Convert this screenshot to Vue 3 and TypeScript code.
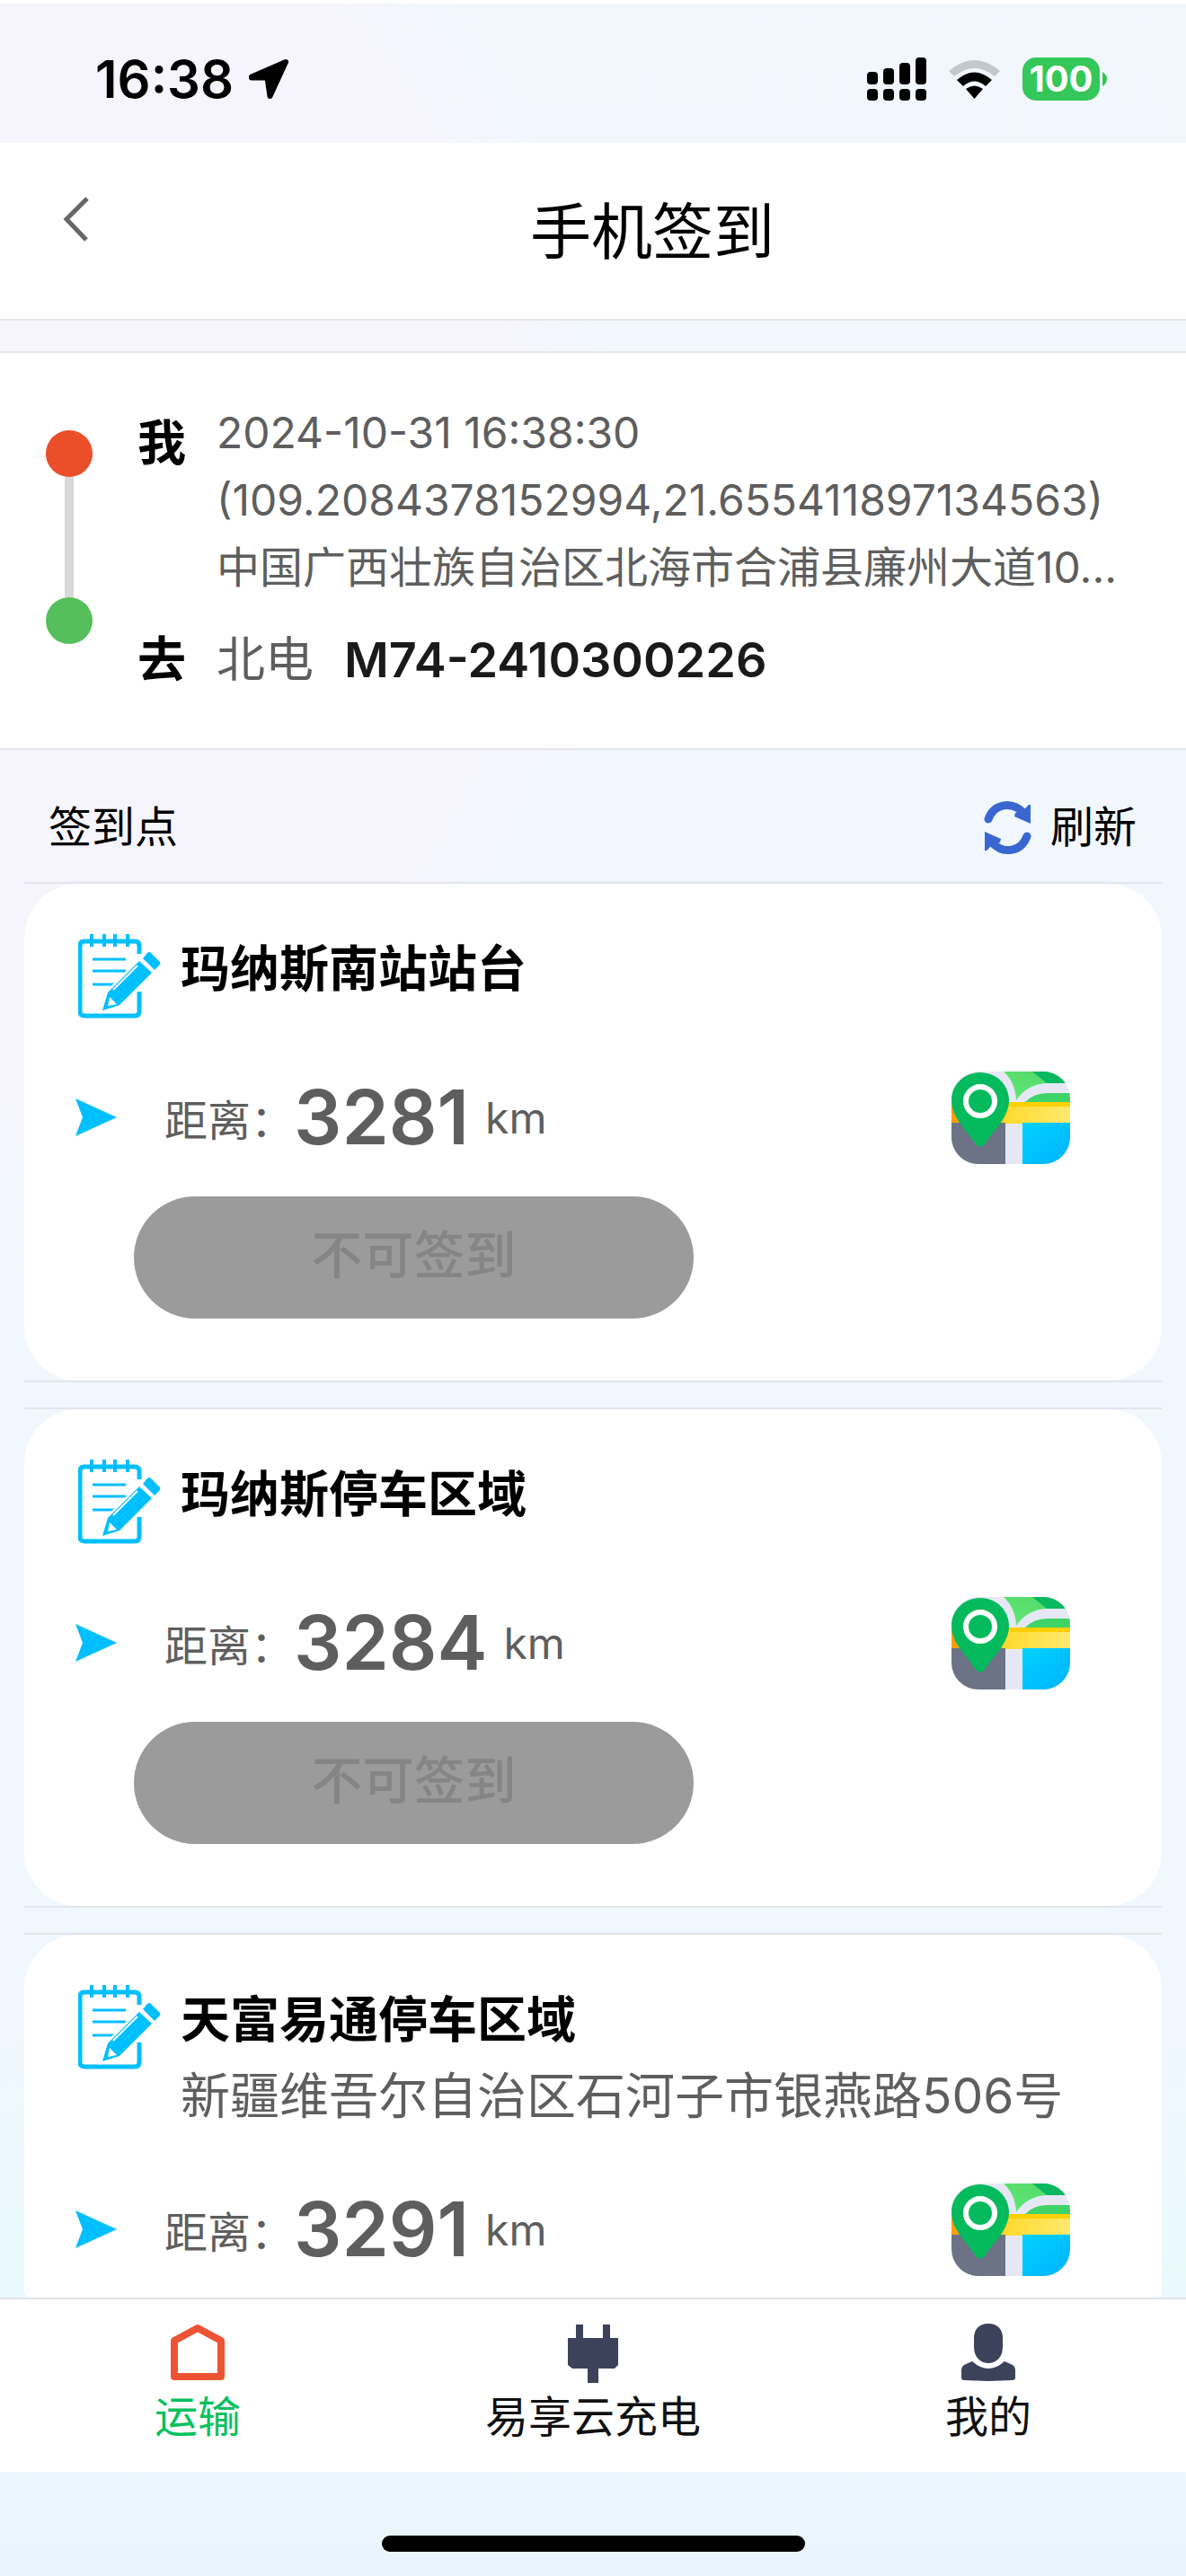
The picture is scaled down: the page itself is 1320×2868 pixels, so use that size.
<script setup lang="ts">
import { ref } from 'vue'

interface CheckPoint {
  id: number
  name: string
  address?: string
  distance: number
  action?: string
}

const points = ref<CheckPoint[]>([
  { id: 1, name: '玛纳斯南站站台', distance: 3281, action: '不可签到' },
  { id: 2, name: '玛纳斯停车区域', distance: 3284, action: '不可签到' },
  { id: 3, name: '天富易通停车区域', address: '新疆维吾尔自治区石河子市银燕路506号', distance: 3291 },
])

const tabs = [
  { key: 'transport', label: '运输' },
  { key: 'charge', label: '易享云充电' },
  { key: 'mine', label: '我的' },
]
const activeTab = ref('transport')
</script>

<template>
  <div class="page">
    <div class="status">
      <span class="time">16:38</span>
      <svg class="locate" width="46" height="46" viewBox="0 0 46 46">
        <path d="M42 4 4 20.500V21.500H21.500L24.500 42 Z" stroke="#000" stroke-width="6" stroke-linejoin="round" />
      </svg>
      <div class="indicators">
        <svg width="66" height="48" viewBox="0 0 66 48">
          <rect x="0" y="16" width="12" height="14" rx="4" />
          <rect x="18" y="12" width="12" height="18" rx="4" />
          <rect x="36" y="6" width="12" height="24" rx="4" />
          <rect x="54" y="0" width="12" height="30" rx="4" />
          <rect v-for="n in 4" :key="n" :x="(n - 1) * 18" y="35" width="12" height="13" rx="4" />
        </svg>
        <svg width="57" height="43" viewBox="0 0 57 43">
          <path d="M0 12Q28.500-12 57 12L51 18Q28.500 0 6 18Z" fill="#c3c7ce" />
          <path d="M9 22Q28.500 5 48 22L41 29Q28.500 18 16 29Z" />
          <path d="M19 32Q28.500 25 38 32L28.500 43Z" />
        </svg>
        <div class="battery">
          <span class="level">100</span>
          <svg width="5" height="16" viewBox="0 0 5 16"><path d="M0 0Q5 3 5 8T0 16Z" fill="#34c759" /></svg>
        </div>
      </div>
    </div>

    <header class="navbar">
      <button class="back" type="button" aria-label="返回">
        <svg width="30" height="50" viewBox="0 0 30 50">
          <path d="M27 2 4 25 26 48" fill="none" stroke="#666" stroke-width="5" />
        </svg>
      </button>
      <h1>手机签到</h1>
    </header>

    <section class="trip">
      <div class="track">
        <i class="dot from"></i>
        <i class="bar"></i>
        <i class="dot to"></i>
      </div>
      <div class="legs">
        <div class="leg">
          <b class="tag me">我</b>
          <p class="where">2024-10-31 16:38:30<br />(109.2084378152994,21.655411897134563)<br />中国广西壮族自治区北海市合浦县廉州大道10...</p>
        </div>
        <div class="leg">
          <b class="tag">去</b>
          <p class="order"><span>北电</span><strong>M74-2410300226</strong></p>
        </div>
      </div>
    </section>

    <div class="list-head">
      <h2>签到点</h2>
      <button class="refresh" type="button">
        <svg width="54" height="61" viewBox="0 0 54 61">
          <g fill="none" stroke="#3a66d1" stroke-width="9" stroke-linecap="round">
            <path d="M5 21C11 4 31 0 44 14" />
            <path d="M48 40C42 57 22 61 9 47" />
          </g>
          <path d="M46 9 50 5H52V26L34 18 35 14 40 13ZM7 52 3 56H1V35L19 43 18 47 13 48Z" fill="#3a66d1" />
        </svg>
        刷新
      </button>
    </div>

    <ul class="points">
      <li v-for="p in points" :key="p.id" class="point">
        <article class="card">
          <div class="head">
            <svg class="note" width="92" height="96" viewBox="0 0 92 96">
              <g fill="none" stroke="#00bfff">
                <path d="M68 23V14Q68 9 63 9H7Q2 9 2 14V87Q2 92 7 92H63Q68 92 68 87V65" stroke-width="5" />
                <path d="M15 1V15M29 1V15M41 1V15M55 1V15" stroke-width="4" />
                <path d="M16 29H53M16 42H53M16 57H44" stroke-width="3" />
              </g>
              <path d="M68 31 82 44 46 80 27 86 33 66Z" fill="#fff" stroke="#fff" stroke-width="5" />
              <path d="M68 31 82 44 46 80 27 86 33 66Z" fill="#00bfff" />
              <path d="M35 71 43 79 33 81Z" fill="#fff" />
              <path d="M39 63 66 36" stroke="#fff" stroke-width="2" />
              <path d="M77 22Q79 20 81 22L91 32Q92 34 90 36L85 41 72 28Z" fill="#00bfff" />
            </svg>
            <div class="text">
              <h3>{{ p.name }}</h3>
              <p v-if="p.address">{{ p.address }}</p>
            </div>
          </div>

          <div class="metric">
            <svg width="46" height="42" viewBox="0 0 46 42"><path d="M0 0 46 21 0 42 8 21Z" fill="#00bfff" /></svg>
            <span class="label">距离：</span>
            <strong>{{ p.distance }}</strong>
            <span class="unit">km</span>
            <button class="map" type="button" aria-label="地图">
              <svg width="132" height="103" viewBox="0 0 132 103">
                <defs>
                  <clipPath :id="'clip' + p.id"><rect width="132" height="103" rx="30" /></clipPath>
                  <linearGradient :id="'road' + p.id" x1="0" y1="0" x2="1" y2="0">
                    <stop offset="0" stop-color="#ff9a0a" />
                    <stop offset="0.200" stop-color="#ffb515" />
                    <stop offset="0.500" stop-color="#ffdb33" />
                    <stop offset="1" stop-color="#ffe970" />
                  </linearGradient>
                  <linearGradient :id="'sea' + p.id" x1="0" y1="0" x2="1" y2="1">
                    <stop offset="0" stop-color="#00d2ff" />
                    <stop offset="1" stop-color="#00b2ff" />
                  </linearGradient>
                  <linearGradient :id="'land' + p.id" x1="0" y1="1" x2="1" y2="0">
                    <stop offset="0" stop-color="#62e878" />
                    <stop offset="1" stop-color="#4fd765" />
                  </linearGradient>
                </defs>
                <g :clip-path="`url(#clip${p.id})`">
                  <rect width="132" height="103" fill="#e5e8f4" />
                  <path d="M58 0Q71 12 72 32Q84 14 106 13H132V0Z" :fill="`url(#land${p.id})`" />
                  <path d="M90 0H132V13H106Z" fill="#0ab85f" />
                  <path d="M82 34Q92 24 106 24H132V34Z" fill="#3fd467" />
                  <rect y="34" width="132" height="24" :fill="`url(#road${p.id})`" />
                  <rect x="60" y="34" width="72" height="5" fill="#ffd000" />
                  <rect y="57" width="60" height="46" fill="#6c7386" />
                  <rect x="79" y="57" width="53" height="46" :fill="`url(#sea${p.id})`" />
                </g>
                <path d="M32 1C50 1 64 15 64 32 64 52 46 66 37 81Q32 86 27 81C18 66 0 52 0 32 0 15 14 1 32 1Z" fill="#04ba5c" />
                <circle cx="32" cy="33" r="16" fill="none" stroke="#fff" stroke-width="6" />
              </svg>
            </button>
          </div>

          <button v-if="p.action" class="check" type="button" disabled>{{ p.action }}</button>
        </article>
      </li>
    </ul>

    <nav class="tabbar">
      <button
        v-for="t in tabs"
        :key="t.key"
        type="button"
        class="tab"
        :class="{ active: t.key === activeTab }"
        @click="activeTab = t.key"
      >
        <svg v-if="t.key === 'transport'" width="64" height="66" viewBox="0 0 64 66">
          <path d="M6 19 32 5 58 19V59H6Z" fill="none" stroke="#ec5434" stroke-width="8" stroke-linejoin="round" />
        </svg>
        <svg v-else-if="t.key === 'charge'" width="64" height="66" viewBox="0 0 64 66">
          <path d="M13 1H21V16H43V1H51V16H60V46L56 50H38V66H26V50H9L4 46V16H13Z" fill="#3d425b" />
        </svg>
        <svg v-else width="64" height="66" viewBox="0 0 64 66">
          <path d="M32 0C43 0 48 7 48 16V26C48 38 40 44 32 44S16 38 16 26V16C16 7 21 0 32 0Z" fill="#3d425b" />
          <path d="M14 42Q32 58 50 42L59 46Q62 48 62 51V60Q62 63 59 63L32 64 5 63Q2 63 2 60V51Q2 48 5 46Z" fill="#3d425b" />
        </svg>
        <span>{{ t.label }}</span>
      </button>
    </nav>

    <div class="home-area"><i></i></div>
  </div>
</template>

<style>
body {
  margin: 0;
}
</style>

<style scoped>
* {
  box-sizing: border-box;
}

.page {
  display: flex;
  flex-direction: column;
  height: 100vh;
  overflow: hidden;
  color: #000;
  font-family: Inter, "Noto Sans CJK SC", sans-serif;
  background:
    radial-gradient(ellipse 52% 28% at 0 19%, #f6f5fe 84%, rgba(246, 245, 254, 0) 100%),
    linear-gradient(#f2f7fe 0%, #f1f7fe 78%, #e9fafd 88%, #edf7fe 94%, #e9f5fe 100%);
}

h1,
h2,
h3,
p,
ul {
  margin: 0;
  padding: 0;
  font-weight: 400;
}

button {
  padding: 0;
  border: 0;
  background: none;
  color: inherit;
  font: inherit;
}

svg {
  display: block;
  flex: none;
}

.status,
.navbar,
.trip,
.list-head,
.tabbar,
.home-area {
  flex: none;
}

.status {
  display: flex;
  align-items: center;
  height: 159px;
  padding: 13px 88px 0 106px;
  border-top: 4px solid #fff;
}

.time {
  font-size: 58px;
  line-height: 64px;
  font-weight: 600;
}

.locate {
  margin-left: 16px;
}

.indicators {
  display: flex;
  align-items: center;
  gap: 25px;
  margin-left: auto;
}

.battery {
  display: flex;
  align-items: center;
  gap: 3px;
}

.level {
  width: 86px;
  border-radius: 15px;
  background: #34c759;
  color: #fff;
  font-size: 40px;
  line-height: 48px;
  font-weight: 700;
  text-align: center;
}

.navbar {
  display: flex;
  height: 198px;
  background: #fff;
  border-bottom: 2px solid #e6e6ea;
}

.back {
  display: flex;
  align-items: center;
  width: 132px;
  height: 170px;
  padding-left: 70px;
}

h1 {
  flex: 1;
  font-size: 68px;
  line-height: 198px;
  text-align: center;
}

.trip {
  display: flex;
  margin-top: 34px;
  padding: 51px 48px 60px 51px;
  background: #fff;
  border-top: 2px solid #e6e6ea;
  border-bottom: 2px solid #e6e6ea;
}

.track {
  display: flex;
  flex-direction: column;
  align-items: center;
  padding: 35px 0 56px;
}

.dot {
  width: 52px;
  height: 52px;
  border-radius: 50%;
}

.from {
  background: #ea4f2a;
}

.to {
  background: #55bf5b;
}

.bar {
  flex: 1;
  width: 10px;
  background: #d8d8d8;
}

.legs {
  display: flex;
  flex-direction: column;
  gap: 28px;
  margin-left: 50px;
}

.leg {
  display: flex;
}

.tag {
  width: 88px;
  font-size: 54px;
  line-height: 76px;
}

.me {
  padding-top: 12px;
}

.where {
  color: #5e5e5e;
  font-size: 48px;
  line-height: 75px;
  white-space: nowrap;
}

.order {
  display: flex;
  gap: 34px;
  color: #5e5e5e;
  font-size: 54px;
  line-height: 76px;
}

.order strong {
  color: #1a1a1a;
  font-weight: 600;
}

.list-head {
  display: flex;
  align-items: center;
  justify-content: space-between;
  height: 147px;
  padding: 25px 55px 0 54px;
  font-size: 48px;
  line-height: 64px;
}

h2 {
  font-size: 48px;
}

.refresh {
  display: flex;
  align-items: center;
  gap: 20px;
}

.points {
  display: flex;
  flex-direction: column;
  gap: 28px;
  flex: 1;
  min-height: 0;
  padding: 0 27px;
  overflow: hidden;
  list-style: none;
}

.point {
  flex: none;
  border-top: 2px solid #e2e5ed;
  border-bottom: 2px solid #e2e5ed;
}

.card {
  padding: 52px 102px 69px 57px;
  border-radius: 60px;
  background: #fff;
}

.head {
  display: flex;
  gap: 22px;
  min-height: 102px;
  padding-left: 3px;
  font-size: 55px;
  line-height: 85px;
  white-space: nowrap;
}

.note {
  margin-top: 3px;
}

h3 {
  font-size: 55px;
  font-weight: 700;
}

.text p {
  color: #5e5e5e;
}

.metric {
  display: flex;
  align-items: center;
  height: 104px;
  margin-top: 54px;
  color: #5e5e5e;
}

.label {
  margin-left: 53px;
  font-size: 48px;
}

.metric strong {
  font-size: 84px;
  line-height: 104px;
  font-weight: 600;
}

.unit {
  margin-left: 18px;
  font-size: 48px;
}

.map {
  margin-left: auto;
}

.check {
  display: block;
  width: 623px;
  height: 136px;
  margin: 36px 0 0 65px;
  padding-bottom: 4px;
  border-radius: 68px;
  background: #9b9b9b;
  color: #858585;
  font-size: 57px;
  line-height: 80px;
  font-weight: 500;
}

.tabbar {
  display: flex;
  height: 194px;
  background: #fff;
  border-top: 2px solid #e3e4e8;
}

.tab {
  display: flex;
  flex: 1;
  flex-direction: column;
  align-items: center;
  padding-top: 27px;
  color: #111;
  font-size: 48px;
  line-height: 76px;
}

.tab.active {
  color: #07c160;
}

.home-area {
  display: flex;
  justify-content: center;
  height: 116px;
  padding-top: 71px;
}

.home-area i {
  width: 471px;
  height: 18px;
  border-radius: 9px;
  background: #000;
}
</style>
